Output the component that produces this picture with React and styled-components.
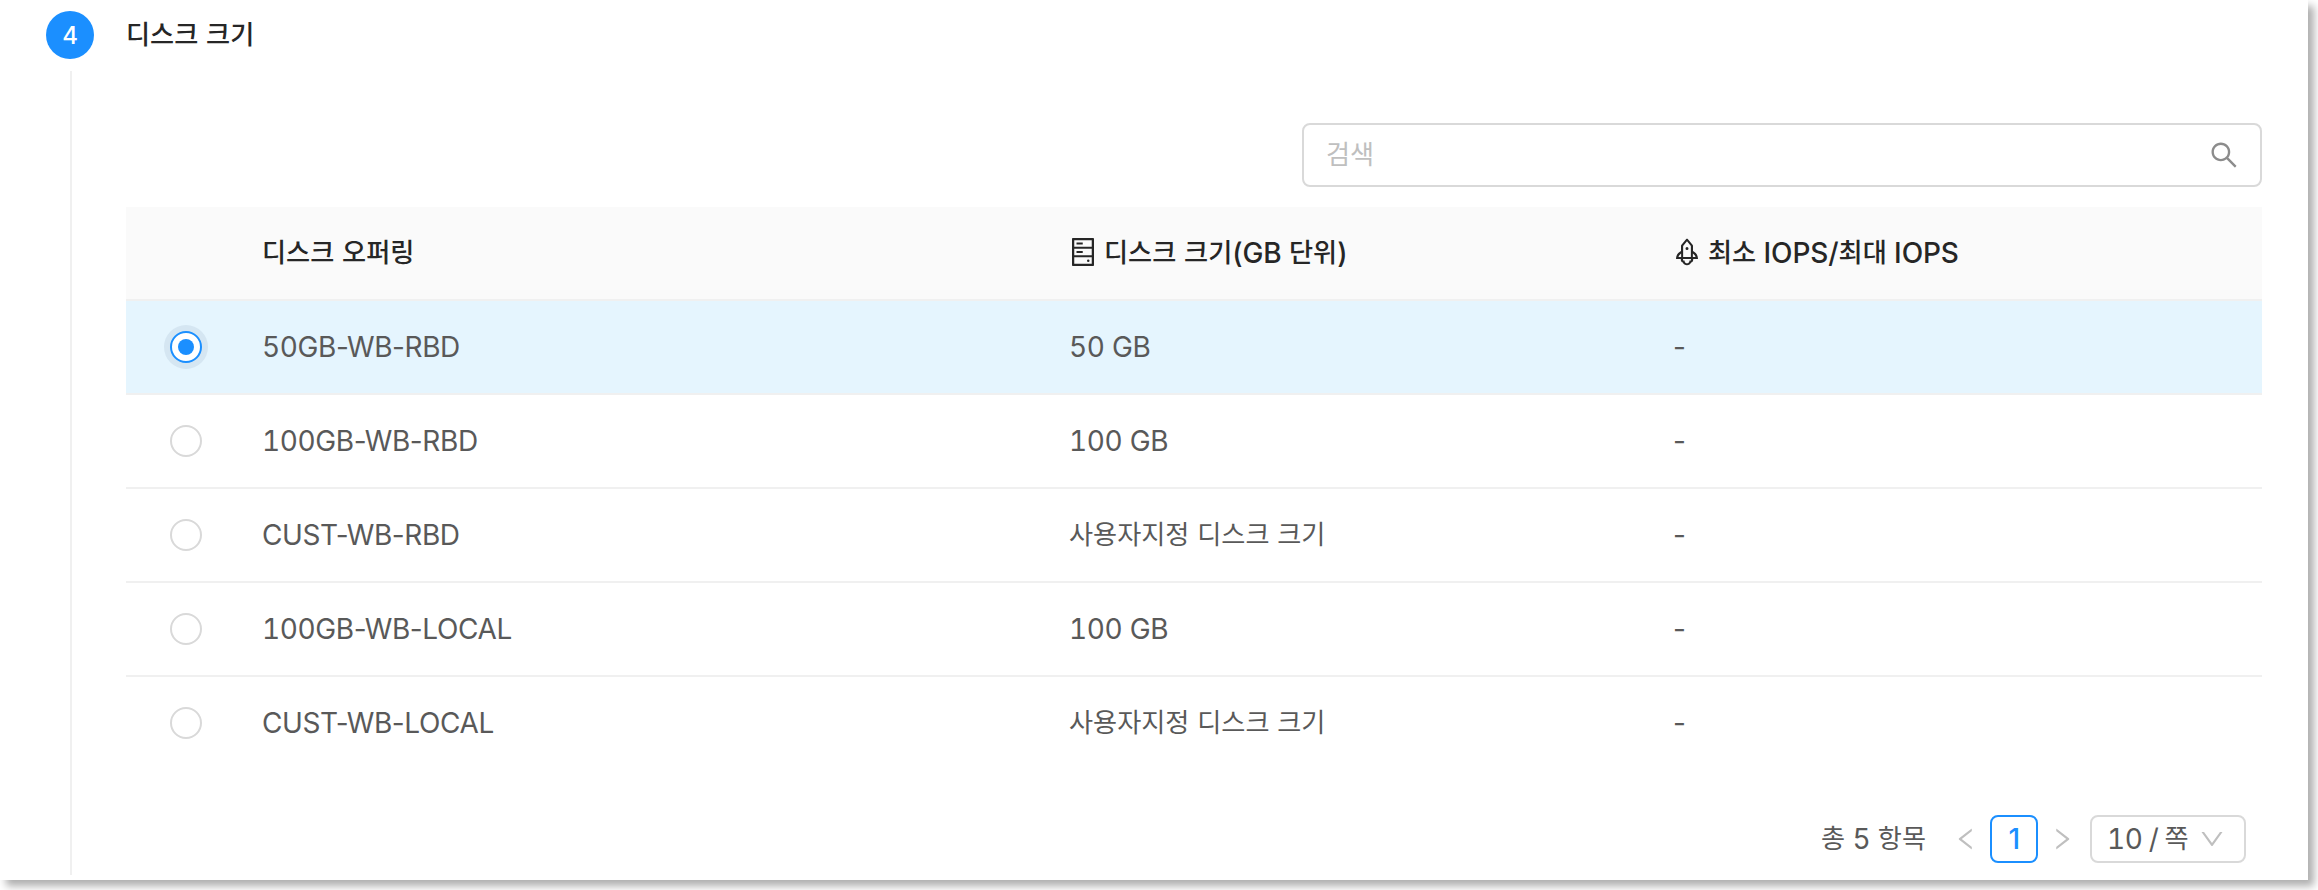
import React from 'react';
import styled, { createGlobalStyle } from 'styled-components';
import {
  AiOutlineHdd,
  AiOutlineRocket,
  AiOutlineSearch,
  AiOutlineLeft,
  AiOutlineRight,
  AiOutlineDown,
} from 'react-icons/ai';

const GlobalStyle = createGlobalStyle`
  *, *::before, *::after { box-sizing: border-box; }
  html, body { margin: 0; background: #fff; }
  body {
    width: 2318px;
    height: 890px;
    overflow: hidden;
    font-family: Inter, "Noto Sans CJK KR", sans-serif;
    font-size: 28px;
    letter-spacing: -0.4px;
    line-height: 44px;
    color: #595959;
  }
  svg { display: block; flex: none; }
`;

const Panel = styled.main`
  display: flex;
  width: 2308px;
  height: 880px;
  padding: 11px 46px 0 46px;
  background: #fff;
  box-shadow: 6px 6px 8px rgba(0, 0, 0, 0.32);
`;

const StepRail = styled.div`
  display: flex;
  flex-direction: column;
  align-items: center;
  width: 48px;
  margin-right: 32px;
`;

const StepNumber = styled.div`
  width: 48px;
  height: 48px;
  border-radius: 50%;
  background: #1b8fff;
  color: #fff;
  font-size: 24px;
  font-weight: 500;
  line-height: 49px;
  text-align: center;
`;

const StepTail = styled.div`
  width: 2px;
  height: 804px;
  margin: 12px 0 0 2px;
  background: #f0f0f0;
`;

const StepBody = styled.section`
  flex: 1;
  display: flex;
  flex-direction: column;
`;

const StepTitle = styled.h2`
  height: 48px;
  margin: 0;
  font-size: inherit;
  font-weight: 500;
  line-height: 48px;
  color: #262626;
`;

const Hangul = styled.span`
  font-family: "Noto Sans CJK KR", sans-serif;
  font-size: 26.2px;
  line-height: 1;
  letter-spacing: 0;
  word-spacing: 1.9px;
  vertical-align: 1px;
`;

const Digits = styled.span`
  font-variant-numeric: tabular-nums;
`;

const SearchBox = styled.label`
  display: flex;
  align-items: center;
  justify-content: space-between;
  align-self: flex-end;
  width: 960px;
  height: 64px;
  margin: 64px 0 20px;
  padding: 0 20px 0 22px;
  border: 2px solid #d9d9d9;
  border-radius: 8px;
  color: #bfbfbf;
`;

const SearchIcon = styled(AiOutlineSearch)`
  width: 32px;
  height: 32px;
  margin-bottom: 1px;
  color: #8c8c8c;
`;

const Table = styled.div`
  display: flex;
  flex-direction: column;
`;

const Row = styled.div`
  display: grid;
  grid-template-columns: 104px 807px 604px 1fr;
  align-items: center;
  height: 94px;
  border-bottom: 2px solid ${(p) => (p.$last ? 'transparent' : '#f0f0f0')};
  background: ${(p) => (p.$head ? '#fafafa' : p.$selected ? '#e5f5fe' : '#fff')};
  color: ${(p) => (p.$head ? '#262626' : '#595959')};
  font-weight: ${(p) => (p.$head ? 500 : 400)};
  letter-spacing: ${(p) => (p.$head ? '-0.1px' : 'inherit')};
`;

const Cell = styled.div`
  display: flex;
  align-items: center;
  padding-left: 32px;
  white-space: pre;
`;

const RadioCell = styled.div`
  display: flex;
  padding-left: 44px;
`;

const Radio = styled.span`
  display: flex;
  align-items: center;
  justify-content: center;
  width: 32px;
  height: 32px;
  border: 2px solid ${(p) => (p.$checked ? '#1b8fff' : '#d9d9d9')};
  border-radius: 50%;
  background: #fff;
  box-shadow: ${(p) => (p.$checked ? '0 0 0 6px rgba(24, 60, 100, 0.08)' : 'none')};
`;

const RadioDot = styled.span`
  width: 16px;
  height: 16px;
  border-radius: 50%;
  background: #1b8fff;
`;

const HeadIcon = styled.span`
  display: flex;
  margin: 0 5px 2px -2px;
  font-size: 32px;
`;

const Footer = styled.footer`
  display: flex;
  align-items: center;
  justify-content: flex-end;
  height: 48px;
  margin: 44px 16px 0 0;
`;

const Total = styled.span`
  margin-right: 28px;
  white-space: pre;
`;

const PageArrow = styled.span`
  display: flex;
  justify-content: center;
  width: 24px;
  color: #bfbfbf;
`;

const PageNumber = styled.span`
  width: 48px;
  height: 48px;
  margin: 0 12px;
  border: 2px solid #1b8fff;
  border-radius: 8px;
  color: #1b8fff;
  font-weight: 500;
  line-height: 44px;
  text-align: center;
`;

const PageSize = styled.span`
  display: flex;
  align-items: center;
  justify-content: space-between;
  width: 156px;
  height: 48px;
  margin-left: 16px;
  padding: 0 18px 0 15px;
  border: 2px solid #d9d9d9;
  border-radius: 8px;
  white-space: pre;
  word-spacing: -1.3px;
`;

const DownIcon = styled(AiOutlineDown)`
  width: 28px;
  height: 28px;
  color: #bfbfbf;
`;

const RUNS = /([가-힣]+(?: [가-힣]+)*|\d+)/;

function Text({ children }) {
  return (
    <span>
      {children.split(RUNS).map((part, i) => {
        if (i % 2 === 0) return part;
        const Run = /\d/.test(part) ? Digits : Hangul;
        return <Run key={i}>{part}</Run>;
      })}
    </span>
  );
}

const offerings = [
  { name: '50GB-WB-RBD', size: '50 GB', iops: '-' },
  { name: '100GB-WB-RBD', size: '100 GB', iops: '-' },
  { name: 'CUST-WB-RBD', size: '사용자지정 디스크 크기', iops: '-' },
  { name: '100GB-WB-LOCAL', size: '100 GB', iops: '-' },
  { name: 'CUST-WB-LOCAL', size: '사용자지정 디스크 크기', iops: '-' },
];

export default function App() {
  return (
    <>
      <GlobalStyle />
      <Panel>
        <StepRail>
          <StepNumber>4</StepNumber>
          <StepTail />
        </StepRail>
        <StepBody>
          <StepTitle>
            <Text>디스크 크기</Text>
          </StepTitle>
          <SearchBox>
            <Text>검색</Text>
            <SearchIcon />
          </SearchBox>
          <Table>
            <Row $head>
              <span />
              <Cell>
                <Text>디스크 오퍼링</Text>
              </Cell>
              <Cell>
                <HeadIcon>
                  <AiOutlineHdd />
                </HeadIcon>
                <Text>디스크 크기(GB 단위)</Text>
              </Cell>
              <Cell>
                <HeadIcon>
                  <AiOutlineRocket />
                </HeadIcon>
                <Text>최소 IOPS/최대 IOPS</Text>
              </Cell>
            </Row>
            {offerings.map((o, i) => (
              <Row key={o.name} $selected={i === 0} $last={i === offerings.length - 1}>
                <RadioCell>
                  <Radio $checked={i === 0}>{i === 0 && <RadioDot />}</Radio>
                </RadioCell>
                <Cell>
                  <Text>{o.name}</Text>
                </Cell>
                <Cell>
                  <Text>{o.size}</Text>
                </Cell>
                <Cell>
                  <Text>{o.iops}</Text>
                </Cell>
              </Row>
            ))}
          </Table>
          <Footer>
            <Total>
              <Text>총 5 항목</Text>
            </Total>
            <PageArrow>
              <AiOutlineLeft size={28} />
            </PageArrow>
            <PageNumber>1</PageNumber>
            <PageArrow>
              <AiOutlineRight size={28} />
            </PageArrow>
            <PageSize>
              <Text>10 / 쪽</Text>
              <DownIcon />
            </PageSize>
          </Footer>
        </StepBody>
      </Panel>
    </>
  );
}
